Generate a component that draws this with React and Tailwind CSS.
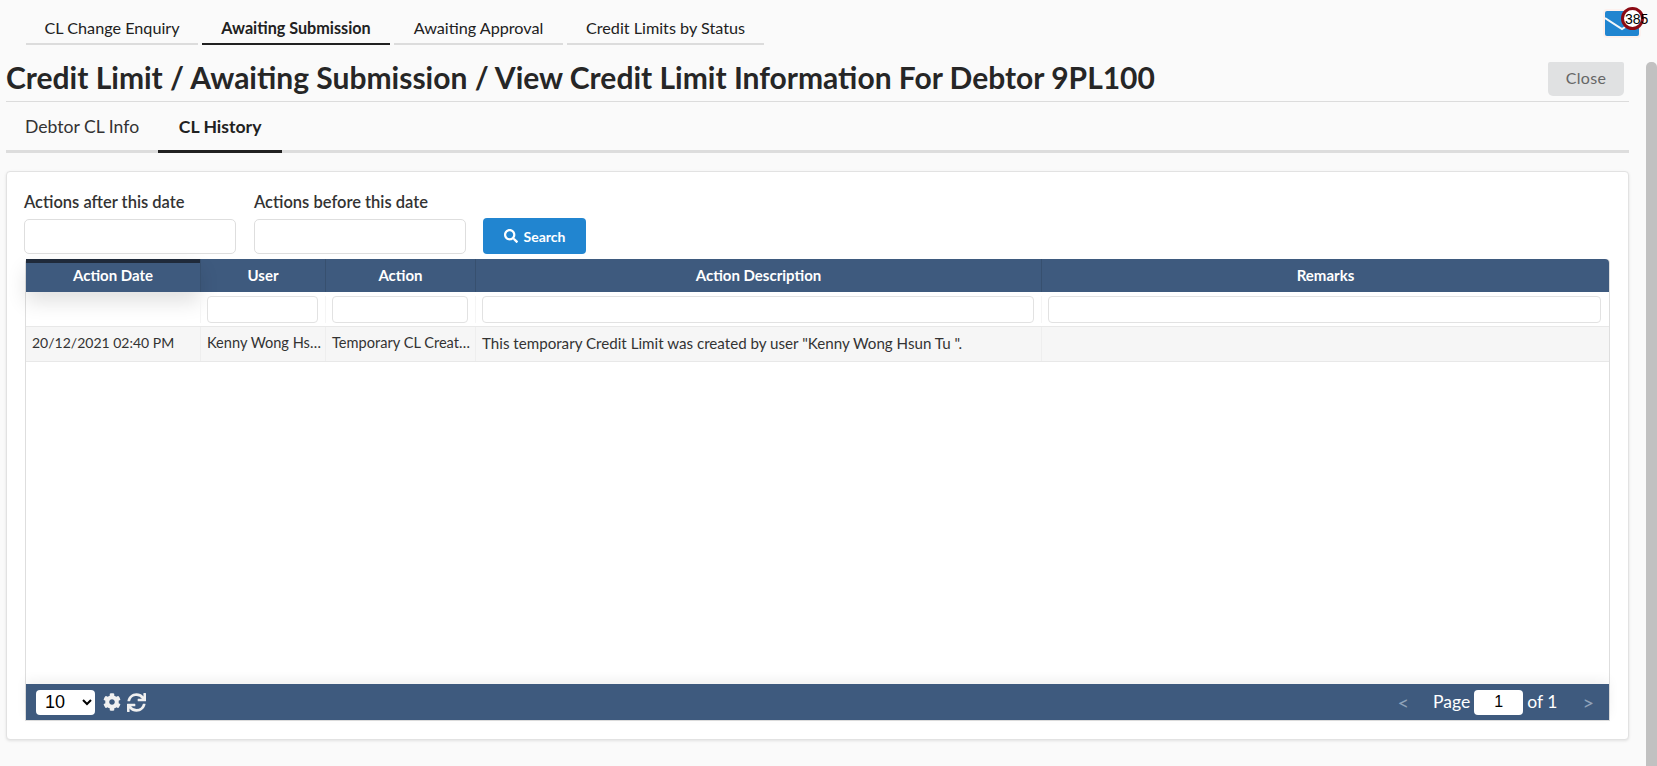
import { FaCog, FaSearch, FaSync } from "react-icons/fa";

const topTabs = [
  { label: "CL Change Enquiry", width: "w-[172px]" },
  { label: "Awaiting Submission", width: "w-[188px]", active: true },
  { label: "Awaiting Approval", width: "w-[169px]" },
  { label: "Credit Limits by Status", width: "w-[197px]" },
];

const columns = ["Action Date", "User", "Action", "Action Description", "Remarks"];
const gridCols = "grid grid-cols-[174px_125px_150px_566px_1fr]";

function FilterInput() {
  return <input type="text" className="h-[27px] w-full rounded-[4px] border border-[#e2e2e2] bg-white" />;
}

function DateField({ label }) {
  return (
    <div className="w-[212px]">
      <label className="mb-[8px] block text-[16.5px] leading-[18px] font-semibold whitespace-nowrap text-[#333]">{label}</label>
      <input type="text" className="block h-[35px] w-full rounded-[5px] border border-[#dedede] bg-white" />
    </div>
  );
}

export default function App() {
  return (
    <div className="flex h-screen overflow-hidden bg-[#fafafa] font-['Lato',sans-serif] text-[#212121]">
      <div className="w-[1646px] shrink-0">
        <div className="relative flex h-[45px] items-end gap-[4px] pl-[26px]">
          {topTabs.map((tab) => (
            <div
              key={tab.label}
              className={
                tab.active
                  ? `${tab.width} flex h-[31px] items-center justify-center border-b-2 border-[#212121] pb-[1px] text-[16.2px] font-bold`
                  : `${tab.width} flex h-[31px] items-center justify-center border-b-2 border-[#dcdcdc] pb-[1px] text-[16.2px]`
              }
            >
              {tab.label}
            </div>
          ))}
          <div className="absolute top-[9px] left-[1603px] flex h-[29px] w-[38px] items-center justify-center rounded-[4px] bg-[#fdf1ee]">
            <svg width="34" height="25" viewBox="0 0 34 25">
              <rect width="34" height="25" rx="2" fill="#2185d0" />
              <path d="M0 7 L17 18 L34 7" fill="none" stroke="#f4f7fa" strokeWidth="2" />
            </svg>
          </div>
          <div className="absolute top-[7px] left-[1621px] flex h-[23px] w-[23px] items-center rounded-full border-[3px] border-[#8b0a14] bg-white pl-[1px] font-['Liberation_Sans',sans-serif] text-[14px] leading-none whitespace-nowrap text-black">
            385
          </div>
        </div>

        <div className="ml-[6px] flex h-[57px] w-[1623px] justify-between border-b border-[#dcdcdc]">
          <h1 className="pt-[13px] text-[30px] leading-[38px] font-bold text-[#262626]">
            Credit Limit / Awaiting Submission / View Credit Limit Information For Debtor 9PL100
          </h1>
          <button className="mt-[17px] mr-[5px] h-[34px] w-[76px] rounded-b-[5px] rounded-t-[2px] bg-[#e0e1e2] pb-[2px] text-[16px] tracking-[0.3px] text-[#666]">
            Close
          </button>
        </div>

        <div className="ml-[6px] flex h-[51px] w-[1623px] border-b-[3px] border-[#dddddd] text-[17.6px]">
          <div className="flex h-[51px] items-center pr-[19px] pb-[1px] pl-[19px] text-[#333]">Debtor CL Info</div>
          <div className="flex h-[51px] w-[124px] items-center justify-center border-b-[3px] border-[#212121] pt-[2px] font-bold">CL History</div>
        </div>

        <div className="mt-[18px] ml-[6px] h-[569px] w-[1623px] rounded-[4px] border border-[#e2e2e2] bg-white pt-[21px] shadow-[0_1px_3px_rgba(0,0,0,0.1)]">
          <div className="ml-[17px] flex items-end">
            <DateField label="Actions after this date" />
            <div className="ml-[18px]">
              <DateField label="Actions before this date" />
            </div>
            <button className="ml-[17px] flex h-[36px] w-[103px] items-center justify-center gap-[6px] rounded-[4px] bg-[#2185d0] text-[14px] font-bold text-white">
              <FaSearch className="text-[14px]" />
              Search
            </button>
          </div>

          <div className="mt-[5px] ml-[18px] flex h-[462px] w-[1585px] flex-col rounded-t-[4px] border-x border-b border-[#dedede]">
            <div className={`${gridCols} h-[33px] rounded-tr-[4px] bg-[#3e5a7e] text-[15px] font-bold text-white`}>
              {columns.map((col, i) => (
                <div
                  key={col}
                  className={
                    i === 0
                      ? "flex items-center justify-center border-t-[4px] border-[#1f2a3a] pb-[4px] shadow-[0_10px_20px_rgba(0,0,0,0.12)]"
                      : "flex items-center justify-center border-l border-[#37506f] pb-[1px]"
                  }
                >
                  {col}
                </div>
              ))}
            </div>

            <div className={`${gridCols} h-[34px] items-center`}>
              <div />
              <div className="border-l border-[#f5f5f5] pr-[7px] pl-[6px]"><FilterInput /></div>
              <div className="border-l border-[#f5f5f5] pr-[7px] pl-[6px]"><FilterInput /></div>
              <div className="border-l border-[#f5f5f5] pr-[7px] pl-[6px]"><FilterInput /></div>
              <div className="border-l border-[#f5f5f5] pr-[8px] pl-[6px]"><FilterInput /></div>
            </div>

            <div className={`${gridCols} h-[36px] border-y border-[#e8e8e8] bg-[#f6f6f6] text-[15.15px] leading-[32px] text-[#333]`}>
              <div className="truncate px-[6px] text-[14px]">20/12/2021 02:40 PM</div>
              <div className="truncate border-l border-[#eeeeee] pr-[1px] pl-[6px] text-[14.6px]">Kenny Wong Hsun Tu</div>
              <div className="truncate border-l border-[#eeeeee] pr-[3px] pl-[6px] text-[14.6px]">Temporary CL Created</div>
              <div className="truncate border-l border-[#eeeeee] pl-[6px]">
                This temporary Credit Limit was created by user "Kenny Wong Hsun Tu ".
              </div>
              <div className="border-l border-[#eeeeee]" />
            </div>

            <div className="flex-1 bg-white" />

            <div className="flex h-[36px] items-center justify-between bg-[#3e5a7e] pr-[15px] pl-[10px] text-white shadow-[0_-4px_12px_rgba(0,0,0,0.06)]">
              <div className="flex items-center">
                <select className="h-[25px] w-[59px] rounded-[4px] bg-white pl-[5px] font-['Liberation_Sans',sans-serif] text-[18px] text-black">
                  <option>10</option>
                </select>
                <FaCog className="ml-[8px] text-[18px] text-[#f0f0f0]" />
                <FaSync className="ml-[6px] text-[19px] text-[#f0f0f0]" />
              </div>
              <div className="flex items-center text-[17.5px]">
                <span className="mr-[24px] text-[20px] text-[#8fa2ba]">&lt;</span>
                <span>Page</span>
                <input
                  type="text"
                  defaultValue="1"
                  className="mx-[4px] h-[25px] w-[49px] rounded-[4px] bg-white text-center font-['Liberation_Sans',sans-serif] text-[16px] text-black"
                />
                <span>of 1</span>
                <span className="ml-[25px] text-[20px] text-[#8fa2ba]">&gt;</span>
              </div>
            </div>
          </div>
        </div>
      </div>

      <div className="mt-[62px] w-[11px] rounded-t-[5px] bg-[#c1c1c1]" />
    </div>
  );
}
